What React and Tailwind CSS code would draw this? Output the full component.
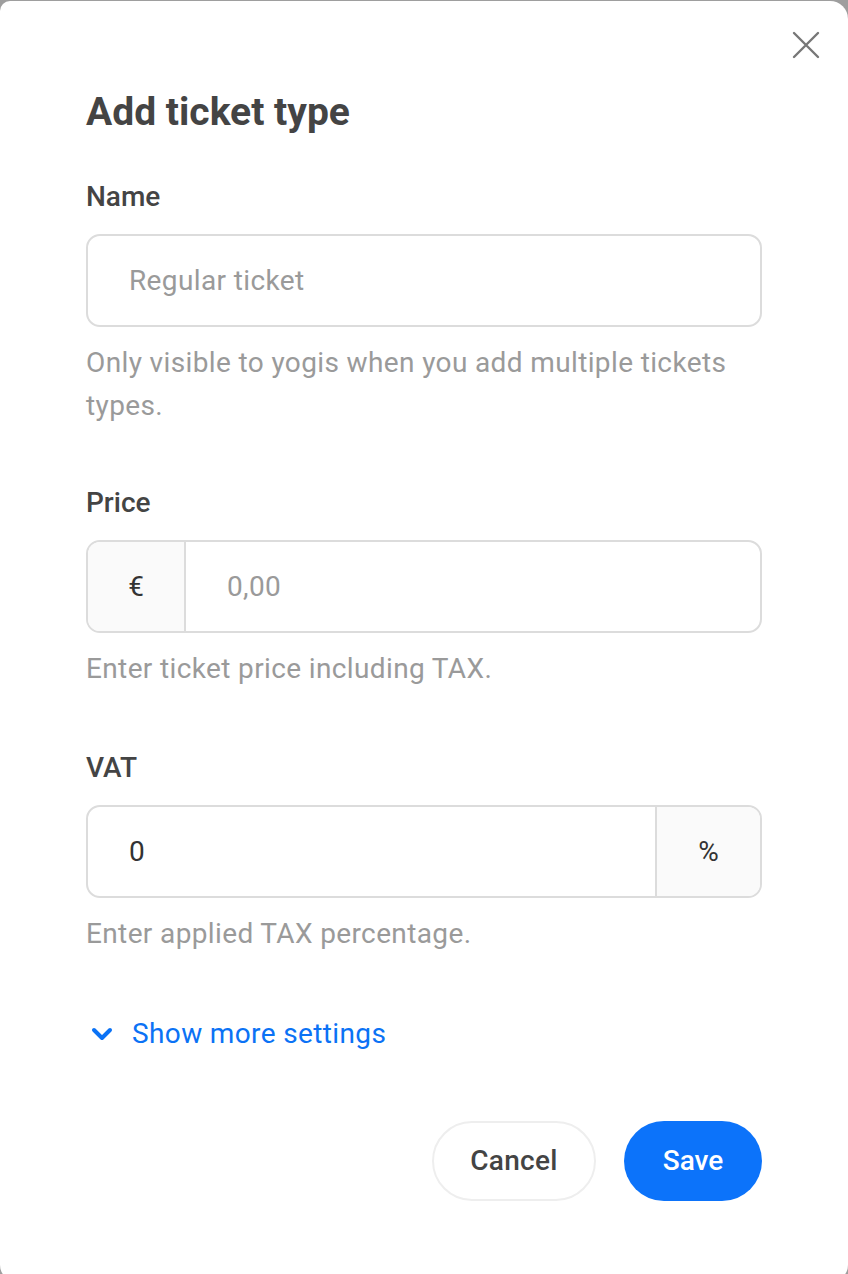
import { ChevronDown } from "lucide-react";

const font = { fontFamily: "Roboto, 'Noto Sans', sans-serif" };

function Field({ label, help, children, className = "" }) {
    return (
        <div className={className}>
            <div className="text-[28px] leading-[40px] font-medium text-[#444]">{label}</div>
            <div className="mt-[17px]">{children}</div>
            <p className="mt-[14px] text-[28px] leading-[43px] tracking-[0.37px] text-[#9a9a9a]">{help}</p>
        </div>
    );
}

export default function App() {
    return (
        <div className="h-[1274px] bg-[#9e9e9e] pt-[1px] overflow-hidden" style={font}>
            <div className="relative h-[1280px] bg-white rounded-tl-[10px] rounded-tr-[18px] rounded-b-[16px] px-[86px] pt-[87px]">
                <button className="absolute left-[792px] top-[30px] text-[#777]">
                    <svg width="28" height="28" viewBox="0 0 28 28" fill="none" stroke="currentColor" strokeWidth="2.4" strokeLinecap="round">
                        <path d="M2 2L26 26M26 2L2 26" />
                    </svg>
                </button>

                <h2 className="text-[39px] leading-[48px] font-bold text-[#444]">Add ticket type</h2>

                <Field
                    className="mt-[41px]"
                    label="Name"
                    help="Only visible to yogis when you add multiple tickets types."
                >
                    <div className="h-[93px] rounded-[14px] border-2 border-[#dcdcdc] flex items-center pl-[41px] text-[28px] tracking-[0.37px] text-[#9a9a9a]">
                        Regular ticket
                    </div>
                </Field>

                <Field className="mt-[56px]" label="Price" help="Enter ticket price including TAX.">
                    <div className="h-[93px] rounded-[14px] border-2 border-[#dcdcdc] flex overflow-hidden text-[28px]">
                        <div className="w-[98px] bg-[#fafafa] border-r-2 border-[#dcdcdc] flex items-center justify-center text-[#333]">
                            €
                        </div>
                        <div className="flex-1 flex items-center pl-[41px] tracking-[0.37px] text-[#9a9a9a]">0,00</div>
                    </div>
                </Field>

                <Field className="mt-[58px]" label="VAT" help="Enter applied TAX percentage.">
                    <div className="h-[93px] rounded-[14px] border-2 border-[#dcdcdc] flex overflow-hidden text-[28px]">
                        <div className="flex-1 flex items-center pl-[41px] text-[#333]">0</div>
                        <div className="w-[105px] bg-[#fafafa] border-l-2 border-[#dcdcdc] flex items-center justify-center text-[#333]">
                            %
                        </div>
                    </div>
                </Field>

                <button className="mt-[59px] flex items-center gap-[14px] text-[#0b72f5] text-[28px] leading-[40px] tracking-[0.37px]">
                    <ChevronDown size={32} strokeWidth={3} />
                    Show more settings
                </button>

                <div className="mt-[67px] flex justify-end gap-[28px]">
                    <button className="w-[164px] h-[80px] rounded-full border-2 border-[#eeeeee] text-[28px] font-medium tracking-[0.3px] text-[#444]">
                        Cancel
                    </button>
                    <button className="w-[138px] h-[80px] rounded-full bg-[#0c73fa] text-[28px] font-medium text-white">
                        Save
                    </button>
                </div>
            </div>
        </div>
    );
}
